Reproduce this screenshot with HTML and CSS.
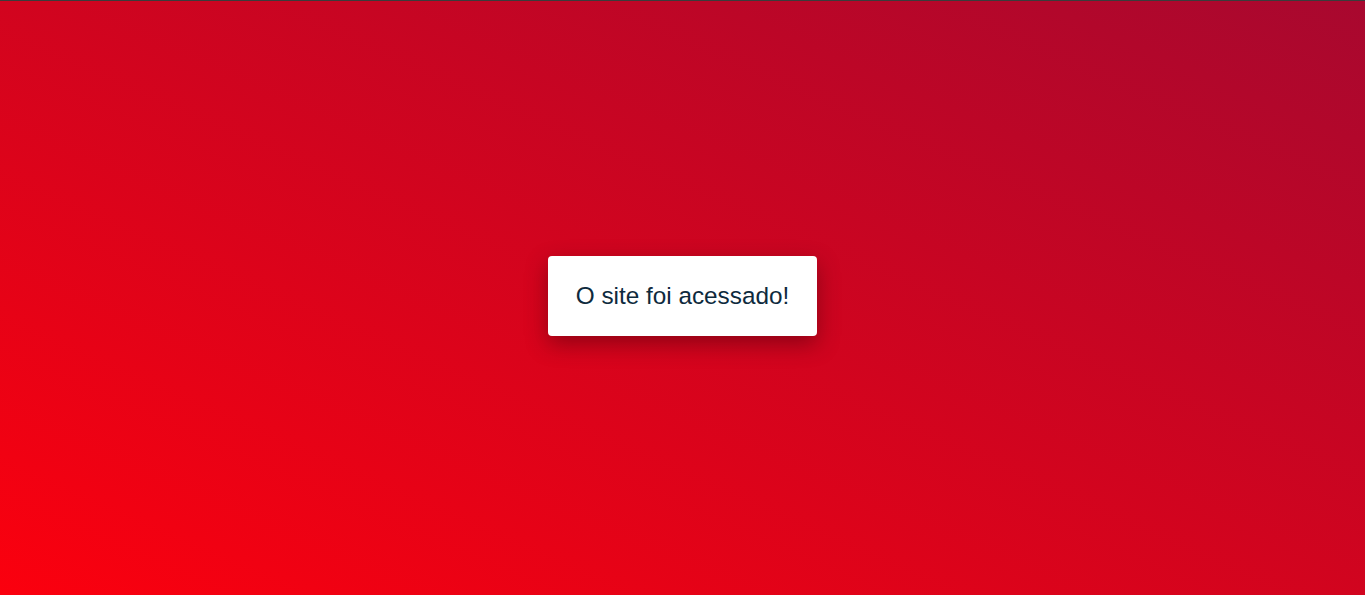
FILE: index.html
```html
<!DOCTYPE html>
<html lang="pt">
<head>
<meta charset="utf-8">
<title>Acesso</title>
<link rel="stylesheet" href="styles.css">
</head>
<body>
<main class="page">
  <div class="card">
    <p class="message">O site foi acessado!</p>
  </div>
</main>
</body>
</html>
```
FILE: styles.css
```css
html, body {
  margin: 0;
  padding: 0;
  height: 100%;
}
body {
  background: linear-gradient(to top right, #fb000e, #a8082f);
  border-top: 1px solid #3b3b3b;
  box-sizing: border-box;
  font-family: "Liberation Sans", Arial, sans-serif;
}
.page {
  box-sizing: border-box;
  height: 100%;
  display: flex;
  align-items: center;
  justify-content: center;
  padding-bottom: 5px;
}
.card {
  background: #ffffff;
  border-radius: 4px;
  padding: 26px 28px;
  box-shadow: 0 8px 22px rgba(60, 0, 10, 0.45);
}
.message {
  margin: 0;
  font-size: 24.3px;
  line-height: 28px;
  color: #0e2a3d;
}
```
